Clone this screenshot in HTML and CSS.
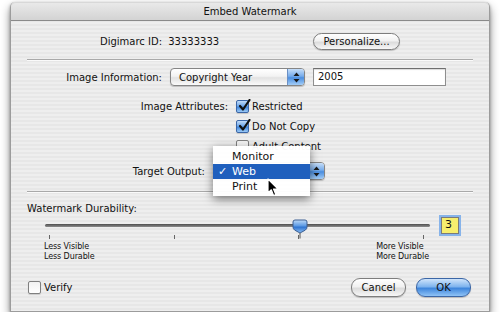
FILE: index.html
```html
<!DOCTYPE html>
<html lang="en">
<head>
    <meta charset="UTF-8">
    <title>Embed Watermark</title>
    <link rel="stylesheet" href="styles.css">
</head>
<body>
    <div class="window">
        <div class="titlebar">Embed Watermark</div>
        <div class="content">
            <div class="row row-id">
                <div class="id-group">
                    <span>Digimarc ID:</span>
                    <span class="id-value">33333333</span>
                </div>
                <button class="pill btn-personalize">Personalize...</button>
            </div>

            <div class="separator"></div>

            <div class="row row-info">
                <span class="label-col label-info">Image Information:</span>
                <div class="popup popup-info">
                    <span class="popup-text">Copyright Year</span>
                    <span class="popup-arrows">
                        <svg width="7" height="11" viewBox="0 0 7 11"><path d="M3.5 0.5 L6.5 4 L0.5 4 Z M3.5 10.5 L6.5 7 L0.5 7 Z" fill="#1a1a1a"/></svg>
                    </span>
                </div>
                <div class="textfield field-year">2005</div>
            </div>

            <div class="attrs">
                <div class="attr-row">
                    <span class="label-col label-attrs">Image Attributes:</span>
                    <span class="checkbox checked">
                        <svg width="14" height="14" viewBox="0 0 14 14"><path d="M3 7 L6 10.5 L12.5 1" fill="none" stroke="#111" stroke-width="2.2" stroke-linecap="round" stroke-linejoin="round"/></svg>
                    </span>
                    <span>Restricted</span>
                </div>
                <div class="attr-row">
                    <span class="label-col label-attrs"></span>
                    <span class="checkbox checked">
                        <svg width="14" height="14" viewBox="0 0 14 14"><path d="M3 7 L6 10.5 L12.5 1" fill="none" stroke="#111" stroke-width="2.2" stroke-linecap="round" stroke-linejoin="round"/></svg>
                    </span>
                    <span>Do Not Copy</span>
                </div>
                <div class="attr-row">
                    <span class="label-col label-attrs"></span>
                    <span class="checkbox"></span>
                    <span>Adult Content</span>
                </div>
            </div>

            <div class="row row-target">
                <span class="label-col label-target">Target Output:</span>
                <!-- popup is open: its title is covered by the menu -->
                <div class="popup popup-target">
                    <span class="popup-text"></span>
                    <span class="popup-arrows">
                        <svg width="7" height="11" viewBox="0 0 7 11"><path d="M3.5 0.5 L6.5 4 L0.5 4 Z M3.5 10.5 L6.5 7 L0.5 7 Z" fill="#1a1a1a"/></svg>
                    </span>
                </div>

                <ul class="menu">
                    <li>Monitor</li>
                    <li class="selected"><span class="check">✓</span>Web</li>
                    <li>Print</li>
                </ul>

                <svg class="cursor" width="12" height="19" viewBox="0 0 12 19">
                    <path d="M1 1 L1 15 L4.3 11.8 L6.6 17.5 L8.8 16.6 L6.5 11 L11 11 Z" fill="#000" stroke="#fff" stroke-width="1.2" stroke-linejoin="round"/>
                </svg>
            </div>

            <div class="separator sep-2"></div>

            <div class="section-title">Watermark Durability:</div>

            <div class="slider-row">
                <div class="track">
                    <svg class="thumb" width="16" height="20" viewBox="0 0 16 20">
                        <defs>
                            <linearGradient id="thumb-fill" x1="0" y1="0" x2="0" y2="1">
                                <stop offset="0%" stop-color="#bcd9f7"/>
                                <stop offset="45%" stop-color="#5c9ae4"/>
                                <stop offset="55%" stop-color="#2f74d0"/>
                                <stop offset="100%" stop-color="#8ec0f4"/>
                            </linearGradient>
                        </defs>
                        <path d="M3 1 H13 Q15 1 15 3 V8 Q15 10 13.2 11.2 L8 14 L2.8 11.2 Q1 10 1 8 V3 Q1 1 3 1 Z" fill="url(#thumb-fill)" stroke="#3c5f92" stroke-width="1"/>
                        <path d="M8 14 V19.5" stroke="#555" stroke-width="1"/>
                    </svg>
                </div>
                <div class="value-field">3</div>
            </div>

            <div class="ticks"><i></i><i></i><i></i><i></i></div>

            <div class="scale-labels">
                <div>Less Visible<br>Less Durable</div>
                <div>More Visible<br>More Durable</div>
            </div>

            <div class="footer">
                <label class="verify"><span class="checkbox"></span>Verify</label>
                <div class="buttons">
                    <button class="pill btn-cancel">Cancel</button>
                    <button class="pill default btn-ok">OK</button>
                </div>
            </div>
        </div>
    </div>
</body>
</html>
```

FILE: styles.css
```css
:root {
    --pane-light: #eeeeee;
    --pane-dark: #e7e7e7;
    --text-color: #111;
    --line-color: #a9a9a9;
    --aqua-dark: #3b66a6;
}

body {
    margin: 0;
    background: #fff;
    font-family: "DejaVu Sans", "Liberation Sans", sans-serif;
    font-size: 10px;
    color: var(--text-color);
    overflow: hidden;
}

.window {
    width: 478px;
    margin: 2px 0 0 10px;
    border: 1px solid #9c9c9c;
    border-top: none;
    border-radius: 5px 5px 0 0;
    background: repeating-linear-gradient(var(--pane-light) 0 2px, var(--pane-dark) 2px 4px);
    box-shadow: 0 5px 10px rgba(0, 0, 0, 0.45), 0 1px 3px rgba(0, 0, 0, 0.3);
}

.titlebar {
    height: 17px;
    line-height: 18px;
    text-align: center;
    border-radius: 5px 5px 0 0;
    border-top: 1px solid #d8d8d8;
    border-bottom: 1px solid #8a8a8a;
    background: linear-gradient(#e9e9e9, #d3d3d3);
    font-size: 10px;
}

.content {
    padding-bottom: 13px;
}

.row {
    display: flex;
    align-items: center;
}

/* Digimarc row */
.row-id {
    height: 16px;
    margin-top: 12px;
    padding-left: 89px;
}

.id-group {
    width: 213px;
}

.id-value {
    margin-left: 3px;
}

.pill {
    font-family: inherit;
    font-size: 10px;
    color: var(--text-color);
    height: 17px;
    padding: 0;
    border: 1px solid #7d7d7d;
    border-radius: 9px;
    background: linear-gradient(#ffffff 0%, #f1f1f1 45%, #dcdcdc 55%, #f7f7f7 100%);
    box-shadow: 0 1px 1px rgba(0, 0, 0, 0.2);
}

.btn-personalize {
    width: 87px;
}

.separator {
    height: 1px;
    margin: 10px 16px 0;
    background: var(--line-color);
    border-bottom: 1px solid #fafafa;
}

/* Image information row */
.row-info {
    height: 18px;
    margin-top: 7px;
}

.label-col {
    text-align: right;
    flex-shrink: 0;
}

.label-info {
    width: 151px;
    margin-right: 8px;
}

.popup {
    display: flex;
    align-items: center;
    height: 16px;
    border: 1px solid #858585;
    border-radius: 4px;
    background: linear-gradient(#ffffff 0%, #f3f3f3 45%, #e2e2e2 55%, #fafafa 100%);
    box-shadow: 0 1px 1px rgba(0, 0, 0, 0.2);
    overflow: hidden;
}

.popup-text {
    flex-grow: 1;
    padding-left: 8px;
}

.popup-arrows {
    width: 16px;
    height: 100%;
    display: flex;
    align-items: center;
    justify-content: center;
    border-left: 1px solid #6a8fc4;
    background: linear-gradient(#c6def9 0%, #77aceb 45%, #4b8ee0 55%, #a3cdf7 100%);
}

.popup-info {
    width: 133px;
}

.textfield {
    box-sizing: border-box;
    height: 18px;
    line-height: 16px;
    padding-left: 4px;
    border: 1px solid #8e8e8e;
    border-top-color: #6e6e6e;
    background: #fff;
    box-shadow: inset 0 1px 1px rgba(0, 0, 0, 0.15);
}

.field-year {
    width: 133px;
    margin-left: 8px;
}

/* Attributes */
.attrs {
    margin-top: 10px;
}

.attr-row {
    display: flex;
    align-items: center;
    height: 20px;
}

.label-attrs {
    width: 217px;
    margin-right: 8px;
}

.checkbox {
    box-sizing: border-box;
    position: relative;
    width: 13px;
    height: 13px;
    margin-right: 3px;
    flex-shrink: 0;
    border: 1px solid #7f7f7f;
    border-radius: 2px;
    background: linear-gradient(#f2f2f2, #ffffff);
    box-shadow: 0 1px 1px rgba(0, 0, 0, 0.15);
}

.checkbox.checked {
    border-color: var(--aqua-dark);
    background: linear-gradient(#c2dcf8 0%, #6ea7ea 45%, #3f86dc 55%, #9ccaf6 100%);
}

.checkbox svg {
    position: absolute;
    left: 0;
    top: -2px;
}

/* Target output */
.row-target {
    position: relative;
    height: 18px;
    margin-top: 6px;
}

.label-target {
    width: 194px;
    margin-right: 8px;
}

.popup-target {
    width: 110px;
}

.menu {
    position: absolute;
    left: 202px;
    top: -16px;
    width: 97px;
    margin: 0;
    padding: 3px 0 2px;
    list-style: none;
    background: rgba(255, 255, 255, 0.96);
    box-shadow: 0 3px 9px rgba(0, 0, 0, 0.5);
    font-size: 11px;
}

.menu li {
    height: 15px;
    line-height: 15px;
    padding-left: 19px;
    position: relative;
}

.menu li.selected {
    background: #1f5fbd;
    color: #fff;
}

.check {
    position: absolute;
    left: 5px;
}

.cursor {
    position: absolute;
    left: 256px;
    top: 16px;
}

.sep-2 {
    margin-top: 11px;
}

/* Durability slider */
.section-title {
    height: 14px;
    line-height: 14px;
    margin-top: 9px;
    padding-left: 16px;
}

.slider-row {
    display: flex;
    align-items: center;
    height: 18px;
    padding-left: 34px;
}

.track {
    position: relative;
    width: 385px;
    height: 3px;
    border-radius: 2px;
    background: linear-gradient(#4d4d4d, #8d8d8d);
}

.thumb {
    position: absolute;
    left: 247px;
    top: -5px;
}

.value-field {
    box-sizing: border-box;
    width: 18px;
    height: 17px;
    line-height: 13px;
    margin-left: 11px;
    padding-left: 3px;
    border: 1px solid #7a7a7a;
    background: #f6ee6e;
    box-shadow: 0 0 0 2px #86b3ea;
    font-size: 11px;
}

.ticks {
    display: flex;
    justify-content: space-between;
    width: 375px;
    height: 4px;
    margin: 1px 0 0 38px;
}

.ticks i {
    width: 1px;
    background: #666;
}

.scale-labels {
    display: flex;
    justify-content: space-between;
    width: 385px;
    margin: 3px 0 0 33px;
    font-size: 8px;
    letter-spacing: -0.1px;
    line-height: 10px;
}

/* Footer */
.footer {
    display: flex;
    align-items: center;
    justify-content: space-between;
    height: 21px;
    margin-top: 15px;
    padding: 0 18px 0 17px;
}

.verify {
    display: flex;
    align-items: center;
}

.buttons {
    display: flex;
    gap: 10px;
}

.btn-cancel, .btn-ok {
    width: 55px;
    height: 19px;
}

.pill.default {
    border-color: var(--aqua-dark);
    background: linear-gradient(#cfe4fb 0%, #7fb4ee 45%, #3f86dc 55%, #8fc3f6 100%);
}
```
